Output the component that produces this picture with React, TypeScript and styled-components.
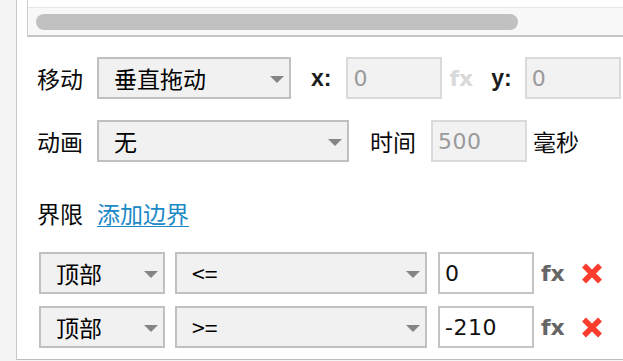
import React from "react";
import styled, { createGlobalStyle } from "styled-components";

const GlobalStyle = createGlobalStyle`
  html, body {
    margin: 0;
    padding: 0;
    background: #ffffff;
  }
  body {
    font-family: "Noto Sans CJK SC", "Liberation Sans", sans-serif;
    color: #1e1e1e;
  }
`;

const CJK = `"Noto Sans CJK SC", "Noto Sans", sans-serif`;
const LATIN = `"DejaVu Sans", "Noto Sans CJK SC", sans-serif`;

const Frame = styled.div`
  display: flex;
  width: 623px;
  height: 361px;
  overflow: hidden;
  background: #f3f3f3;
`;

const Gutter = styled.div`
  width: 16px;
  flex-shrink: 0;
  background: #f3f3f3;
`;

const Panel = styled.div`
  flex: 1;
  height: 359px;
  display: flex;
  flex-direction: column;
  background: #ffffff;
  border-left: 1px solid #c9c9c9;
  border-bottom: 1px solid #bdbdbd;
  min-width: 0;
`;

const ScrollBox = styled.div`
  margin-left: 10px;
  padding-top: 7px;
  box-sizing: border-box;
  height: 37px;
  border-left: 1px solid #cfcfcf;
  border-bottom: 2px solid #c4c4c4;
  background: #ffffff;
`;

const Track = styled.div`
  height: 28px;
  border-top: 1px solid #e6e6e6;
  background: #f8f8f8;
  padding: 6px 0 0 8px;
  box-sizing: border-box;
`;

const Thumb = styled.div`
  width: 482px;
  height: 16px;
  border-radius: 8px;
  background: #c1c1c1;
`;

const Form = styled.div`
  display: flex;
  flex-direction: column;
  padding: 20px 0 0 20px;
`;

const Row = styled.div<{ $mt?: number; $indent?: number }>`
  display: flex;
  align-items: center;
  height: 42px;
  margin-top: ${(p) => p.$mt ?? 0}px;
  margin-left: ${(p) => p.$indent ?? 0}px;
  white-space: nowrap;
`;

const Label = styled.span`
  width: 60px;
  flex-shrink: 0;
  font-family: ${CJK};
  font-size: 23px;
  color: #0a0a0a;
`;

const Text = styled.span<{ $ml?: number }>`
  margin-left: ${(p) => p.$ml ?? 0}px;
  font-family: ${CJK};
  font-size: 23px;
  color: #0a0a0a;
`;

const Axis = styled.span<{ $ml?: number }>`
  margin-left: ${(p) => p.$ml ?? 0}px;
  font-family: "Liberation Sans", sans-serif;
  font-weight: 700;
  font-size: 23px;
  color: #1c1c1c;
`;

const Select = styled.div<{ $w: number; $ml?: number }>`
  display: flex;
  align-items: center;
  justify-content: space-between;
  width: ${(p) => p.$w}px;
  height: 42px;
  margin-left: ${(p) => p.$ml ?? 0}px;
  box-sizing: border-box;
  padding: 0 5px 0 15px;
  flex-shrink: 0;
  background: #f1f1f1;
  border: 2px solid #c0c0c0;
  font-family: ${CJK};
  font-size: 23px;
  color: #000000;
`;

const Caret = styled.span`
  width: 0;
  height: 0;
  border-left: 7px solid transparent;
  border-right: 7px solid transparent;
  border-top: 7px solid #858585;
  margin-top: 2px;
`;

const Field = styled.div<{ $disabled?: boolean; $ml?: number }>`
  display: flex;
  align-items: center;
  width: 96px;
  height: 42px;
  margin-left: ${(p) => p.$ml ?? 0}px;
  box-sizing: border-box;
  padding-left: 5px;
  flex-shrink: 0;
  background: ${(p) => (p.$disabled ? "#f2f2f2" : "#ffffff")};
  border: 2px solid ${(p) => (p.$disabled ? "#dadada" : "#c4c4c4")};
  font-family: ${LATIN};
  font-size: 22px;
  letter-spacing: 0.5px;
  color: ${(p) => (p.$disabled ? "#9a9a9a" : "#111111")};
`;

const Fx = styled.span<{ $muted?: boolean; $ml?: number }>`
  margin-left: ${(p) => p.$ml ?? 0}px;
  font-family: "DejaVu Sans", sans-serif;
  font-weight: 700;
  font-size: 22px;
  color: ${(p) => (p.$muted ? "#d9d9d9" : "#666666")};
`;

const AddLink = styled.a`
  font-family: ${CJK};
  font-size: 23px;
  color: #1b89c6;
  text-decoration: underline;
  text-underline-offset: 3px;
  text-decoration-thickness: 1px;
  cursor: pointer;
`;

const Remove = styled.button`
  margin-left: 16px;
  padding: 0;
  border: 0;
  background: transparent;
  display: flex;
  cursor: pointer;
`;

function RemoveIcon() {
  return (
    <svg width="22" height="21" viewBox="0 0 22 21">
      <path d="M3 2.5 L19 18.5 M19 2.5 L3 18.5" stroke="#fb3b2c" strokeWidth="5.5" strokeLinecap="butt" />
    </svg>
  );
}

function Dropdown({ value, width, ml }: { value: string; width: number; ml?: number }) {
  return (
    <Select $w={width} $ml={ml}>
      <span>{value}</span>
      <Caret />
    </Select>
  );
}

const bounds = [
  { edge: "顶部", op: "<=", value: "0" },
  { edge: "顶部", op: ">=", value: "-210" },
];

export default function App() {
  return (
    <>
      <GlobalStyle />
      <Frame>
        <Gutter />
        <Panel>
          <ScrollBox>
            <Track>
              <Thumb />
            </Track>
          </ScrollBox>
          <Form>
            <Row>
              <Label>移动</Label>
              <Dropdown value="垂直拖动" width={194} />
              <Axis $ml={20}>x:</Axis>
              <Field $disabled $ml={15}>0</Field>
              <Fx $muted $ml={7}>fx</Fx>
              <Axis $ml={18}>y:</Axis>
              <Field $disabled $ml={13}>0</Field>
            </Row>
            <Row $mt={21}>
              <Label>动画</Label>
              <Dropdown value="无" width={252} />
              <Text $ml={21}>时间</Text>
              <Field $disabled $ml={15}>500</Field>
              <Text $ml={6}>毫秒</Text>
            </Row>
            <Row $mt={30}>
              <Label>界限</Label>
              <AddLink>添加边界</AddLink>
            </Row>
            {bounds.map((b, i) => (
              <Row key={i} $mt={i === 0 ? 18 : 12} $indent={2}>
                <Dropdown value={b.edge} width={126} />
                <Dropdown value={b.op} width={252} ml={10} />
                <Field $ml={11}>{b.value}</Field>
                <Fx $ml={7}>fx</Fx>
                <Remove aria-label="删除">
                  <RemoveIcon />
                </Remove>
              </Row>
            ))}
          </Form>
        </Panel>
      </Frame>
    </>
  );
}
